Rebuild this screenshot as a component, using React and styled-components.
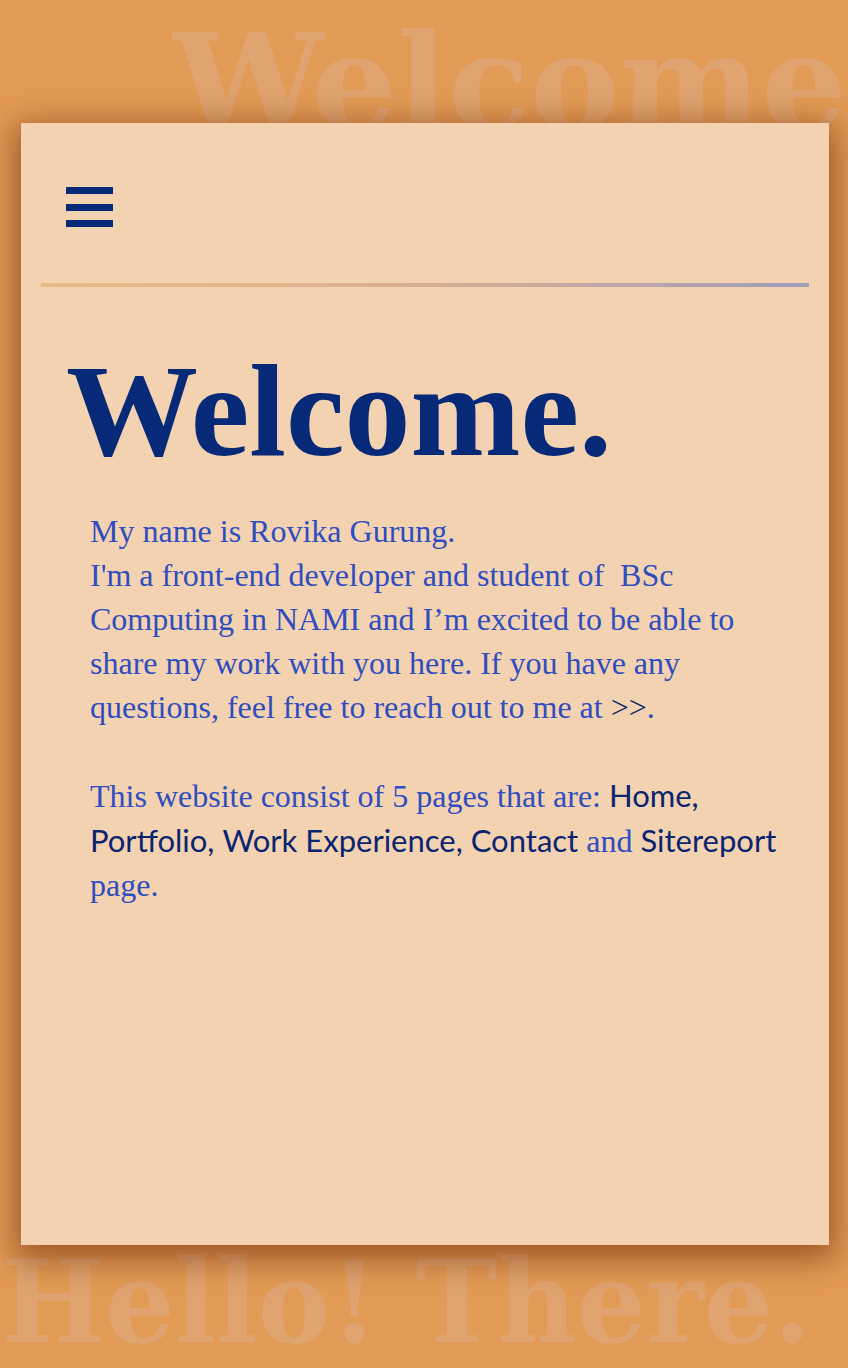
import React from "react";
import styled, { createGlobalStyle } from "styled-components";

const Global = createGlobalStyle`
  html, body { margin: 0; padding: 0; background: #e29b56; }
  * { box-sizing: border-box; }
`;

const Page = styled.div`
  position: relative;
  overflow: hidden;
  min-height: 1368px;
  padding: 123px 19px 123px 21px;
  background: #e29b56;
`;

const BgWord = styled.div`
  position: absolute;
  top: ${(p) => p.$top}px;
  left: ${(p) => p.$left}px;
  font-family: "DejaVu Serif Condensed", "DejaVu Serif", serif;
  font-stretch: condensed;
  font-weight: 700;
  font-size: ${(p) => p.$size}px;
  line-height: 1;
  color: #dfa46f;
  white-space: nowrap;
  transform: scaleX(${(p) => p.$sx});
  transform-origin: left top;
  user-select: none;
  z-index: 0;
`;

const Card = styled.main`
  position: relative;
  z-index: 1;
  height: 1122px;
  padding: 64px 20px 0;
  background: #f2d2b0;
  box-shadow: 0 8px 30px 6px rgba(110, 40, 5, 0.6);
`;

const MenuButton = styled.button`
  display: flex;
  flex-direction: column;
  gap: 9.5px;
  width: 47px;
  margin: 0 0 0 25px;
  padding: 0;
  border: 0;
  background: none;
  cursor: pointer;
`;

const Bar = styled.span`
  display: block;
  width: 47px;
  height: 7px;
  background: #062a78;
`;

const Divider = styled.hr`
  margin: 56px 0 0;
  height: 4px;
  border: 0;
  background: linear-gradient(90deg, #ebb987 0%, #dcb08f 45%, #a29dbc 100%);
`;

const Heading = styled.h1`
  margin: 58px 0 0 25px;
  font-family: "Liberation Serif", serif;
  font-weight: 700;
  font-size: 132px;
  line-height: 132px;
  color: #072a78;
`;

const Text = styled.p`
  margin: ${(p) => (p.$first ? "32px" : "44px")} 15px 0 49px;
  font-family: "Liberation Serif", serif;
  font-size: 32px;
  line-height: 44px;
  color: #2f4dbf;
`;

const Link = styled.a`
  font-family: ${(p) => (p.$serif ? '"Liberation Serif", serif' : 'Lato, "Open Sans", sans-serif')};
  font-size: ${(p) => (p.$serif ? "32px" : "31px")};
  color: #0b2470;
  text-decoration: none;
`;

export default function App() {
  return (
    <>
      <Global />
      <Page>
        <BgWord $top={17} $left={173} $size={132} $sx={1.13} aria-hidden="true">
          Welcome
        </BgWord>
        <BgWord $top={1244} $left={2} $size={115} $sx={1.055} aria-hidden="true">
          Hello! There.
        </BgWord>
        <Card>
          <MenuButton aria-label="Menu">
            <Bar />
            <Bar />
            <Bar />
          </MenuButton>
          <Divider />
          <Heading>Welcome.</Heading>
          <Text $first>
            My name is Rovika Gurung.
            <br />
            I'm a front-end developer and student of&nbsp; BSc Computing in NAMI and I’m excited to be able to share my
            work with you here. If you have any questions, feel free to reach out to me at <Link $serif href="#">&gt;&gt;</Link>.
          </Text>
          <Text>
            This website consist of 5 pages that are: <Link href="#">Home,</Link>{" "}
            <Link href="#">Portfolio,</Link> <Link href="#">Work Experience,</Link> <Link href="#">Contact</Link> and{" "}
            <Link href="#">Sitereport</Link> page.
          </Text>
        </Card>
      </Page>
    </>
  );
}
